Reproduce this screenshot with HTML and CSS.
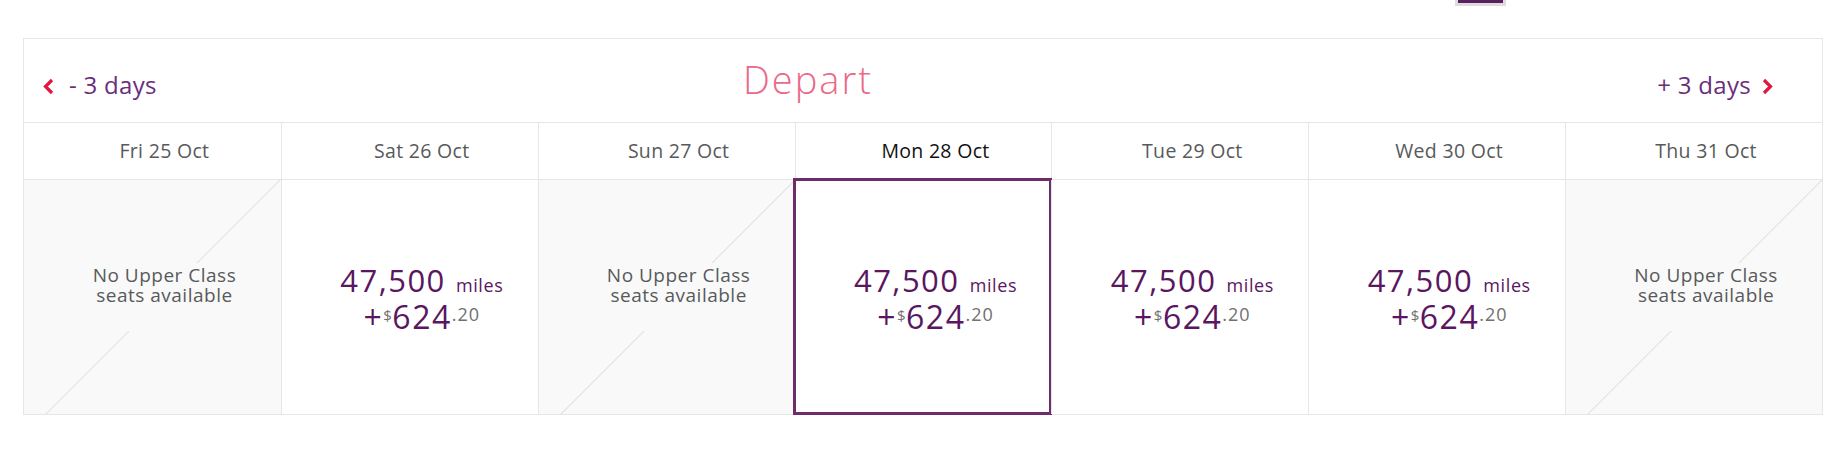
FILE: index.html
```html
<!DOCTYPE html>
<html lang="en">
<head>
    <meta charset="UTF-8">
    <meta name="viewport" content="width=device-width, initial-scale=1.0">
    <title>Depart - Upper Class reward seats</title>
    <link rel="stylesheet" href="styles.css">
</head>
<body>

    <div class="topbar">
        <span class="top-btn"></span>
    </div>

    <section class="calendar">
        <!-- Week navigation -->
        <div class="cal-head">
            <a class="shift shift-prev" href="#">
                <svg class="chev" width="12" height="17" viewBox="0 0 12 17"><polyline points="10,2 3.5,8.5 10,15"/></svg>
                - 3 days
            </a>
            <h2 class="cal-title">Depart</h2>
            <a class="shift shift-next" href="#">
                + 3 days
                <svg class="chev" width="12" height="17" viewBox="0 0 12 17"><polyline points="2,2 8.5,8.5 2,15"/></svg>
            </a>
        </div>

        <!-- Dates -->
        <div class="cal-row dates">
            <div class="date">Fri 25 Oct</div>
            <div class="date">Sat 26 Oct</div>
            <div class="date">Sun 27 Oct</div>
            <div class="date selected">Mon 28 Oct</div>
            <div class="date">Tue 29 Oct</div>
            <div class="date">Wed 30 Oct</div>
            <div class="date">Thu 31 Oct</div>
        </div>

        <!-- Fares -->
        <div class="cal-row fares">
            <div class="fare none">
                <p class="none-msg">No Upper Class<br>seats available</p>
            </div>
            <div class="fare">
                <div class="price">
                    <div class="miles"><span class="miles-num">47,500</span> <span class="miles-unit">miles</span></div>
                    <div class="cash">+<span class="cur">$</span>624<span class="cents">.20</span></div>
                </div>
            </div>
            <div class="fare none">
                <p class="none-msg">No Upper Class<br>seats available</p>
            </div>
            <div class="fare selected">
                <div class="price">
                    <div class="miles"><span class="miles-num">47,500</span> <span class="miles-unit">miles</span></div>
                    <div class="cash">+<span class="cur">$</span>624<span class="cents">.20</span></div>
                </div>
            </div>
            <div class="fare">
                <div class="price">
                    <div class="miles"><span class="miles-num">47,500</span> <span class="miles-unit">miles</span></div>
                    <div class="cash">+<span class="cur">$</span>624<span class="cents">.20</span></div>
                </div>
            </div>
            <div class="fare">
                <div class="price">
                    <div class="miles"><span class="miles-num">47,500</span> <span class="miles-unit">miles</span></div>
                    <div class="cash">+<span class="cur">$</span>624<span class="cents">.20</span></div>
                </div>
            </div>
            <div class="fare none">
                <p class="none-msg">No Upper Class<br>seats available</p>
            </div>
        </div>
    </section>

</body>
</html>
```

FILE: styles.css
```css
/* General Styling */
body {
    font-family: 'Open Sans', 'Liberation Sans', sans-serif;
    background-color: #ffffff;
    margin: 0;
    padding: 0;
    color: #58595b;
}

/* Cut-off button above the calendar */
.topbar {
    height: 38px;
    display: flex;
    align-items: flex-start;
}

.top-btn {
    margin-left: 1455px;
    width: 51px;
    height: 6px;
    box-sizing: border-box;
    background-color: #5a1f5e;
    border: 3px solid #dddddd;
    border-top: none;
}

/* Calendar */
.calendar {
    width: 1800px;
    margin-left: 23px;
    box-sizing: border-box;
    border: 1px solid #e6e6e6;
}

.cal-head {
    height: 84px;
    box-sizing: border-box;
    padding: 21px 48px 0 18px;
    border-bottom: 1px solid #e6e6e6;
    display: grid;
    grid-template-columns: 701px auto 1fr;
    align-items: baseline;
}

.shift {
    font-size: 24px;
    line-height: 24px;
    letter-spacing: 0.3px;
    color: #6b2c7b;
    text-decoration: none;
    display: flex;
    align-items: baseline;
    gap: 15px;
}

.shift-next {
    justify-self: end;
    gap: 11px;
}

.chev {
    align-self: center;
    position: relative;
    top: 1px;
}

.chev polyline {
    fill: none;
    stroke: #e1173f;
    stroke-width: 3.2;
}

.cal-title {
    margin: 0;
    font-size: 38px;
    line-height: 38px;
    font-weight: 300;
    letter-spacing: 2px;
    color: #ec6887;
}

.cal-row {
    display: grid;
    grid-template-columns: repeat(7, 1fr);
}

.dates {
    height: 57px;
    box-sizing: border-box;
    border-bottom: 1px solid #e6e6e6;
}

.date,
.fare {
    border-left: 1px solid #e6e6e6;
    padding-left: 24px;
    display: flex;
    align-items: center;
    justify-content: center;
}

.date:first-child,
.fare:first-child {
    border-left: none;
}

.date {
    font-size: 19.5px;
    letter-spacing: 0.3px;
    padding-bottom: 2px;
}

.date.selected {
    color: #111111;
}

.fares {
    height: 234px;
}

.fare {
    position: relative;
}

/* Greyed out day with a diagonal rule */
.fare.none {
    background: #f9f9f9 linear-gradient(135deg, transparent 180px, #e3e3e3 181px, transparent 182.2px);
}

.none-msg {
    margin: 0;
    padding: 2px 6px 26px;
    background-color: #f9f9f9;
    font-size: 19px;
    line-height: 20px;
    letter-spacing: 0.5px;
    text-align: center;
}

.fare.selected::after {
    content: "";
    position: absolute;
    top: -2px;
    right: -1px;
    bottom: -1px;
    left: -3px;
    border: 3px solid #6e2c6c;
}

.price {
    text-align: center;
    color: #5a1660;
    white-space: nowrap;
    padding-top: 3px;
}

.miles {
    font-size: 31px;
    line-height: 32px;
}

.miles-num {
    letter-spacing: 1.5px;
}

.miles-unit {
    font-size: 18px;
    margin-left: 2px;
    letter-spacing: 0.6px;
}

.cash {
    font-size: 32px;
    line-height: 32px;
    letter-spacing: 1.5px;
}

.cur,
.cents {
    color: #707070;
    line-height: 1;
    vertical-align: 8px;
    letter-spacing: 0.5px;
}

.cur {
    font-size: 15px;
}

.cents {
    font-size: 18px;
    letter-spacing: 1px;
}
```
